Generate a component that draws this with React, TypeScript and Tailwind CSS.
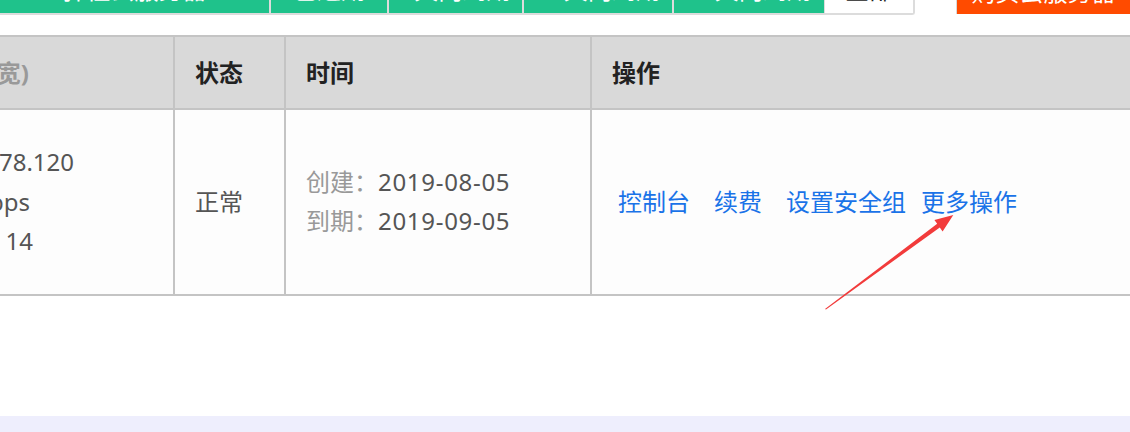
export default function App() {
  const tabs = [
    { label: "弹性云服务器", w: "w-[271px]" },
    { label: "已过期", w: "w-[118px]" },
    { label: "7天内到期", w: "w-[135px]" },
    { label: "15天内到期", w: "w-[150px]" },
    { label: "30天内到期", w: "w-[150px]" },
  ];

  return (
    <div className="relative h-[432px] w-[1130px] overflow-hidden bg-white font-['Noto_Sans','Noto_Sans_CJK_SC',sans-serif] flex flex-col">
      {/* tab bar, cut at the top */}
      <div className="flex h-[15px] shrink-0 overflow-hidden">
        {tabs.map((tab, i) => (
          <div
            key={tab.label}
            className={`${tab.w} h-full flex items-end justify-center bg-[#1fc28b] border-b-2 border-[#dcdcdc] ${
              i < tabs.length - 1 ? "border-r-2" : ""
            }`}
          >
            <span className="mb-[11px] text-[24px] leading-none text-white whitespace-nowrap">
              {tab.label}
            </span>
          </div>
        ))}
        <div className="w-[91px] h-full flex items-end justify-center bg-white border-l border-r-2 border-b-2 border-[#dcdcdc] rounded-br-[3px]">
          <span className="mb-[11px] text-[24px] leading-none text-[#222] whitespace-nowrap">
            全部
          </span>
        </div>
        <div className="w-[41px]" />
        <div className="w-[174px] h-[14px] flex items-end justify-center bg-[#ff4b00] border-l border-[#d8d8d8]">
          <span className="mb-[10px] text-[24px] leading-none text-white whitespace-nowrap">
            购买云服务器
          </span>
        </div>
      </div>

      <div className="h-[20px] shrink-0" />

      {/* table */}
      <div className="shrink-0">
        <div className="flex h-[75px] bg-[#d9d9d9] border-y-2 border-[#c4c4c4] text-[24px] font-bold text-[#222]">
          <div className="w-[175px] border-r-2 border-[#c4c4c4] overflow-hidden flex items-center">
            <div className="w-[29px] flex justify-end whitespace-nowrap text-[#999]">
              配置(CPU/内存/带宽)
            </div>
          </div>
          <div className="w-[111px] border-r-2 border-[#c4c4c4] flex items-center pl-5">
            状态
          </div>
          <div className="w-[306px] border-r-2 border-[#c4c4c4] flex items-center pl-5">
            时间
          </div>
          <div className="flex-1 flex items-center pl-5">操作</div>
        </div>

        <div className="flex h-[186px] bg-[#fdfdfd] border-b-2 border-[#c4c4c4] text-[24px] text-[#555]">
          <div className="w-[175px] border-r-2 border-[#c4c4c4] overflow-hidden flex flex-col justify-center leading-[39.5px] pb-px">
            <div className="w-[74px] flex justify-end whitespace-nowrap">
              公网IP：47.106.78.120
            </div>
            <div className="w-[30px] flex justify-end whitespace-nowrap">
              带宽：1Mbps
            </div>
            <div className="w-[33px] flex justify-end whitespace-nowrap">
              系统：Ubuntu 14
            </div>
          </div>
          <div className="w-[111px] border-r-2 border-[#c4c4c4] flex items-center pl-5">
            正常
          </div>
          <div className="w-[306px] border-r-2 border-[#c4c4c4] flex flex-col justify-center pl-5 leading-[39.5px] pb-[2px]">
            <div className="whitespace-nowrap">
              <span className="text-[#999]">创建：</span>
              <span className="tracking-[0.7px]">2019-08-05</span>
            </div>
            <div className="whitespace-nowrap">
              <span className="text-[#999]">到期：</span>
              <span className="tracking-[0.7px]">2019-09-05</span>
            </div>
          </div>
          <div className="flex-1 flex items-center pl-[26px] text-[#1a73e8] whitespace-nowrap">
            <a className="mr-6">控制台</a>
            <a className="mr-6">续费</a>
            <a className="mr-[15px]">设置安全组</a>
            <a>更多操作</a>
          </div>
        </div>
      </div>

      <div className="flex-1" />
      <div className="h-[16px] shrink-0 bg-[#eeeefd]" />

      {/* red annotation arrow */}
      <svg
        className="absolute inset-0 pointer-events-none"
        width="1130"
        height="432"
        viewBox="0 0 1130 432"
      >
        <polygon
          points="825,309 826,309.6 939.8,227.4 942.6,231.6 953.3,215 934.4,220.1 937.2,223.8"
          fill="#f23b3b"
        />
      </svg>
    </div>
  );
}
